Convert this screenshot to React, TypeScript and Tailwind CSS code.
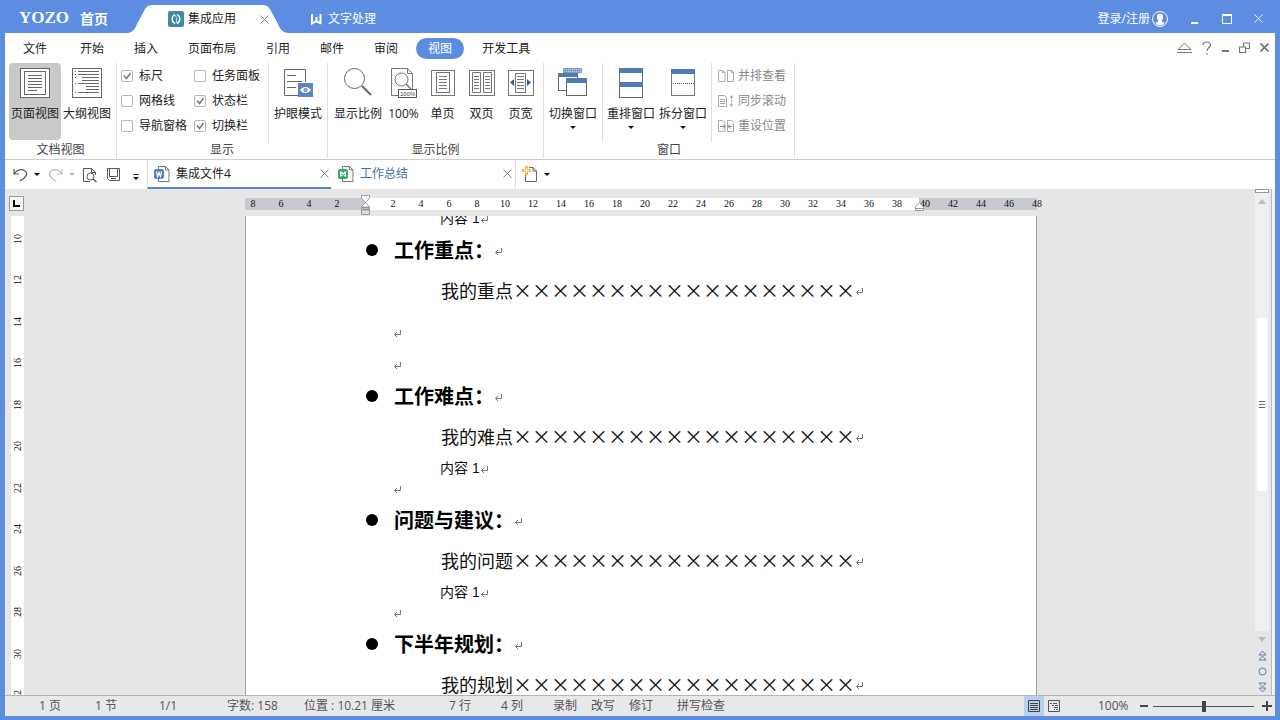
import { useState } from "react";
import type { ReactNode } from "react";

const menuTabs = ["开始", "插入", "页面布局", "引用", "邮件", "审阅", "视图", "开发工具"];

const CloseIcon = ({ size = 10, color = "#777", width = 1 }: { size?: number; color?: string; width?: number }) => (
  <svg width={size} height={size} viewBox="0 0 10 10" stroke={color} strokeWidth={width}>
    <path d="M.5 .5l9 9M9.5 .5l-9 9" />
  </svg>
);

const Caret = ({ color = "#111" }: { color?: string }) => (
  <svg width="6" height="3" viewBox="0 0 6 3" fill={color}>
    <path d="M0 0h6L3 3z" />
  </svg>
);

const ReturnMark = () => (
  <svg className="mt-1 shrink-0" width="9" height="8" viewBox="0 0 9 8" fill="none" stroke="#777">
    <path d="M7.500 0v4.500H1.500M4 2L1.500 4.500 4 7" />
  </svg>
);

const PageViewIcon = () => (
  <svg width="32" height="32" viewBox="0 0 32 32" fill="none" stroke="#666">
    <rect x="1.500" y="1.500" width="29" height="29" fill="#fff" />
    <rect x="5.500" y="4.500" width="21" height="23" />
    <path d="M9 8.500h14M9 11.500h14M9 14.500h14M9 17.500h14M9 20.500h14M9 23.500h9" />
  </svg>
);

const OutlineIcon = () => (
  <svg width="32" height="32" viewBox="0 0 32 32" fill="none" stroke="#666">
    <rect x="1.500" y="1.500" width="29" height="29" fill="#fff" />
    <path d="M7 4.500h21M7 7.500h21M11 10.500h17M11 13.500h17M7 16.500h21M15 19.500h13M15 22.500h13M7 25.500h21" />
    <path d="M4 4.500h1M4 7.500h1M4 10.500h1M4 16.500h1M4 25.500h1" />
  </svg>
);

const EyeIcon = () => (
  <svg width="32" height="32" viewBox="0 0 32 32" fill="none" stroke="#666">
    <path d="M16 28.500H2.500v-26h21V15" />
    <path d="M5 8.500h9M5 14.500h15M5 20.500h9" />
    <rect x="16" y="16" width="15" height="14" fill="#5b86c0" stroke="none" />
    <path d="M18 23c3-4 8-4 11 0-3 4-8 4-11 0z" fill="#fff" stroke="none" />
    <circle cx="23.500" cy="23" r="2" fill="#5b86c0" stroke="none" />
    <circle cx="23.500" cy="23" r=".7" fill="#fff" stroke="none" />
  </svg>
);

const ZoomIcon = () => (
  <svg width="32" height="32" viewBox="0 0 32 32" fill="none" stroke="#666">
    <circle cx="12.500" cy="11.500" r="10" />
    <path d="M20 19l9 9" strokeWidth="2" />
  </svg>
);

const HundredIcon = () => (
  <svg width="32" height="32" viewBox="0 0 32 32" fill="none" stroke="#777">
    <path d="M10 28.500H3.500v-27h16l5 5V22M19.500 1.500v5h5" />
    <circle cx="13.500" cy="12.500" r="6.500" fill="#fff" />
    <path d="M18 17l5 5" strokeWidth="1.500" />
    <rect x="10.500" y="22.500" width="18" height="8" fill="#fff" stroke="#555" />
    <text x="12" y="29" fontSize="6" fill="#444" stroke="none" fontFamily="Liberation Sans">
      100%
    </text>
  </svg>
);

const OnePageIcon = () => (
  <svg width="32" height="32" viewBox="0 0 32 32" fill="none" stroke="#777">
    <rect x="4.500" y="3.500" width="23" height="25" />
    <rect x="9.500" y="5.500" width="13" height="20" />
    <path d="M12 9.500h8M12 12.500h8M12 15.500h8M12 18.500h8M12 21.500h8" />
  </svg>
);

const TwoPageIcon = () => (
  <svg width="32" height="32" viewBox="0 0 32 32" fill="none" stroke="#777">
    <rect x="3.500" y="3.500" width="25" height="25" />
    <path d="M6.500 5.500h8v20h-8zM17.500 5.500h8v20h-8z" />
    <path d="M8 9.500h5M8 12.500h5M8 15.500h5M8 18.500h5M8 21.500h5M19 9.500h5M19 12.500h5M19 15.500h5M19 18.500h5M19 21.500h5" />
  </svg>
);

const PageWidthIcon = () => (
  <svg width="32" height="32" viewBox="0 0 32 32" fill="none" stroke="#777">
    <rect x="3.500" y="3.500" width="25" height="25" />
    <rect x="10.500" y="6.500" width="10" height="19" />
    <path d="M12 9.500h7M12 12.500h7M12 15.500h7M12 18.500h7M12 21.500h7" />
    <path d="M9 12v7l-4-3.500zM22 12v7l4-3.500z" fill="#2f5f8f" stroke="none" />
  </svg>
);

const SwitchIcon = () => (
  <svg width="32" height="32" viewBox="0 0 32 32" fill="none" stroke="#666">
    <path d="M6 1h19v5H6z" fill="#7d9bc2" stroke="none" />
    <path d="M7 2.500h17M7 4.500h17" stroke="#c5d3e6" strokeDasharray="1 1" />
    <rect x="1.500" y="7.500" width="19" height="16" fill="#fff" />
    <path d="M1 6h20v4H1z" fill="#4d7cb0" stroke="none" />
    <rect x="9.500" y="12.500" width="20" height="16" fill="#fff" />
    <path d="M9 11h21v5H9z" fill="#4d7cb0" stroke="none" />
  </svg>
);

const ArrangeIcon = () => (
  <svg width="32" height="32" viewBox="0 0 32 32" fill="none" stroke="#666">
    <rect x="4.500" y="1.500" width="23" height="29" fill="#fff" />
    <path d="M4 1h24v5H4zM4 15h24v5H4z" fill="#4d7cb0" stroke="none" />
  </svg>
);

const SplitIcon = () => (
  <svg width="32" height="32" viewBox="0 0 32 32" fill="none" stroke="#777">
    <rect x="4.500" y="3.500" width="23" height="25" fill="#fff" />
    <path d="M4 2h24v5H4z" fill="#4d7cb0" stroke="none" />
    <path d="M6 16.500h21" strokeDasharray="1 1" stroke="#444" />
  </svg>
);

const SideBySideIcon = () => (
  <svg width="17" height="14" viewBox="0 0 17 14" fill="none" stroke="#aaa">
    <path d="M.5 1.500h4.500l2 2v9H.5zM9.500 1.500h4l2 2v9h-6zM4.500 1.500v2h2M13.500 1.500v2h2" />
  </svg>
);

const SyncIcon = () => (
  <svg width="17" height="14" viewBox="0 0 17 14" fill="none" stroke="#aaa">
    <path d="M.5 1.500h6l2 2v9h-8zM2 5.500h5M2 7.500h5M2 9.500h5" />
    <path d="M13.500 3v8" strokeDasharray="2 1" />
    <path d="M11.500 3.500l2-2.500 2 2.500zM11.500 10.500l2 2.500 2-2.500z" fill="#aaa" stroke="none" />
  </svg>
);

const ResetIcon = () => (
  <svg width="17" height="14" viewBox="0 0 17 14" fill="none" stroke="#aaa">
    <path d="M.5 1.500h4.500l2 2v9H.5zM9.500 1.500h4l2 2v9h-6z" />
    <path d="M2 7.500h5M5 5.500l2 2-2 2M14 7.500h-4M12 5.500l-2 2 2 2" stroke="#888" />
  </svg>
);

type BigButtonProps = {
  icon: ReactNode;
  label: string;
  narrow?: boolean;
  active?: boolean;
  menu?: boolean;
};

const BigButton = ({ icon, label, narrow, active, menu }: BigButtonProps) => (
  <button
    className={`flex h-[77px] shrink-0 flex-col items-center rounded-sm pt-1 whitespace-nowrap ${
      narrow ? "w-[39px]" : "w-[52px]"
    } ${active ? "bg-[#c9c9c9]" : ""}`}
  >
    {icon}
    <span className="mt-[7px] h-4 leading-4">{label}</span>
    {menu && (
      <span className="mt-1">
        <Caret />
      </span>
    )}
  </button>
);

const Check = ({ label, on }: { label: string; on?: boolean }) => {
  const [checked, setChecked] = useState(!!on);
  return (
    <label className="flex h-[25px] items-center gap-1.5 whitespace-nowrap">
      <span className="relative flex size-3">
        <input
          type="checkbox"
          checked={checked}
          onChange={() => setChecked(!checked)}
          className="size-3 appearance-none rounded-xs border border-[#b5b5b5] bg-white"
        />
        {checked && (
          <svg className="pointer-events-none absolute inset-0" width="12" height="12" viewBox="0 0 12 12" fill="none" stroke="#777">
            <path d="M3 5.500l2.500 3L9.500 3" strokeWidth="1.500" />
          </svg>
        )}
      </span>
      {label}
    </label>
  );
};

const Group = ({ title, children }: { title: string; children: ReactNode }) => (
  <section className="flex shrink-0 flex-col border-r border-[#e0e0e0]">
    <div className="flex min-h-0 flex-1">{children}</div>
    <h2 className="h-4 shrink-0 text-center leading-4 text-[#444]">{title}</h2>
  </section>
);

const Divider = () => <div className="w-px shrink-0 bg-[#e0e0e0]" />;

const TitleBar = () => (
  <header className="flex h-[33px] shrink-0 items-end text-white">
    <div className="flex h-[29px] items-center gap-[11px] pl-[14px]">
      <span className="font-['Liberation_Serif',serif] text-[17px] font-bold">YOZO</span>
      <button className="text-sm font-bold">首页</button>
    </div>
    <div className="relative ml-5 h-[33px] w-[160px]">
      <svg className="absolute inset-0" width="160" height="33" viewBox="0 0 160 33" fill="#fff">
        <path d="M0 33c5-1 7-4 9-9l7-13c2-4 4-6 9-6h109c5 0 7 2 9 6l7 13c2 5 4 8 10 9z" />
      </svg>
      <div className="relative flex h-full items-center pt-[5px] pr-[19px] pl-10 text-[#222]">
        <svg width="16" height="16" viewBox="0 0 16 16">
          <rect width="16" height="16" rx="2" fill="#3f8ba3" />
          <path d="M7 3.500a5 5 0 0 0 0 9M9 3.500a5 5 0 0 1 0 9" fill="none" stroke="#fff" strokeWidth="1.300" />
          <path d="M6.500 3.500c2 2 3 6 1.500 9" fill="none" stroke="#cfe6ec" />
        </svg>
        <span className="ml-1 flex-1">集成应用</span>
        <button aria-label="关闭">
          <CloseIcon size={9} />
        </button>
      </div>
    </div>
    <button className="ml-[23px] flex h-[29px] items-center gap-1.5">
      <svg width="11" height="12" viewBox="0 0 11 12" fill="none" stroke="#fff" strokeWidth="2">
        <path d="M1 1v9.500L5.500 8V4v4.500L9.500 10V1" />
      </svg>
      文字处理
    </button>
    <div className="ml-auto flex h-[29px] items-center">
      <button className="flex items-center gap-0.5">
        登录/注册
        <svg width="16" height="16" viewBox="0 0 16 16">
          <circle cx="8" cy="8" r="7.500" fill="none" stroke="#fff" />
          <path d="M8 2.500c2.500 0 3.300 1.700 3 4-.2 1.500-.8 2.300-1.300 3 .1 1.500 2 1.500 3 2.500-2.500 3-7 3-9.400 0 1-1 2.900-1 3-2.500C5.800 8.800 5.200 8 5 6.500c-.3-2.300.5-4 3-4z" fill="#fff" />
        </svg>
      </button>
      <button aria-label="最小化" className="ml-[23px] flex h-3 w-[7px] items-end pb-px">
        <span className="h-0.5 w-full bg-white" />
      </button>
      <button aria-label="最大化" className="ml-6 size-2.5 border border-t-2 border-white" />
      <button aria-label="关闭窗口" className="mr-3 ml-[22px]">
        <CloseIcon size={9} color="#fff" />
      </button>
    </div>
  </header>
);

const MenuBar = () => {
  const [current, setCurrent] = useState("视图");
  return (
    <nav className="flex h-[29px] shrink-0 items-center gap-1.5 pt-0.5 pl-1.5">
      <button className="mr-[3px] h-[21px] px-3">文件</button>
      {menuTabs.map((tab) => (
        <button
          key={tab}
          onClick={() => setCurrent(tab)}
          className={`h-[21px] shrink-0 rounded-full px-3 ${tab === current ? "bg-[#5c8de1] text-white" : ""}`}
        >
          {tab}
        </button>
      ))}
      <div className="mr-1.5 ml-auto flex items-center gap-2.5 pb-0.5">
        <button aria-label="收起功能区">
          <svg width="15" height="13" viewBox="0 0 15 13" fill="none" stroke="#777">
            <path d="M1 8.500l6.500-6.500 6.500 6.500zM0 11.500h15" />
          </svg>
        </button>
        <button aria-label="帮助">
          <svg width="10" height="14" viewBox="0 0 10 14" fill="none" stroke="#777" strokeWidth="1.200">
            <path d="M1 4c0-4 7.500-4 7.500 0C8.500 6.500 5 6.500 5 10M5 12v1.500" />
          </svg>
        </button>
        <button aria-label="最小化文档" className="flex h-3 w-[7px] items-end pb-0.5">
          <span className="h-0.5 w-full bg-[#777]" />
        </button>
        <button aria-label="还原文档">
          <svg width="11" height="11" viewBox="0 0 11 11" fill="#fff" stroke="#777">
            <path d="M4.500 1h6v5.500h-6z" strokeWidth="1.200" />
            <path d="M.5 5h6v5.500h-6z" strokeWidth="1.200" />
          </svg>
        </button>
        <button aria-label="关闭文档">
          <CloseIcon size={9} width={2} />
        </button>
      </div>
    </nav>
  );
};

const Ribbon = () => (
  <div className="flex h-[98px] shrink-0 border-b border-[#cfcfcf] pt-px pb-px">
    <Group title="文档视图">
      <div className="flex pr-[3px] pl-1">
        <BigButton icon={<PageViewIcon />} label="页面视图" active />
        <BigButton icon={<OutlineIcon />} label="大纲视图" />
      </div>
    </Group>
    <Group title="显示">
      <div className="grid h-[75px] grid-cols-[73px_74px] pl-1">
        <Check label="标尺" on />
        <Check label="任务面板" />
        <Check label="网格线" />
        <Check label="状态栏" on />
        <Check label="导航窗格" />
        <Check label="切换栏" on />
      </div>
      <Divider />
      <div className="px-[3px]">
        <BigButton icon={<EyeIcon />} label="护眼模式" />
      </div>
    </Group>
    <Group title="显示比例">
      <div className="flex pr-[3px] pl-1">
        <BigButton icon={<ZoomIcon />} label="显示比例" />
        <BigButton icon={<HundredIcon />} label="100%" narrow />
        <BigButton icon={<OnePageIcon />} label="单页" narrow />
        <BigButton icon={<TwoPageIcon />} label="双页" narrow />
        <BigButton icon={<PageWidthIcon />} label="页宽" narrow />
      </div>
    </Group>
    <Group title="窗口">
      <div className="px-[3px]">
        <BigButton icon={<SwitchIcon />} label="切换窗口" menu />
      </div>
      <Divider />
      <div className="flex px-0.5">
        <BigButton icon={<ArrangeIcon />} label="重排窗口" menu />
        <BigButton icon={<SplitIcon />} label="拆分窗口" menu />
      </div>
      <Divider />
      <div className="flex flex-col pr-2 pl-1.5 text-[#888]">
        <button className="flex h-[25px] items-center gap-[3px]">
          <SideBySideIcon />
          并排查看
        </button>
        <button className="flex h-[25px] items-center gap-[3px]">
          <SyncIcon />
          同步滚动
        </button>
        <button className="flex h-[25px] items-center gap-[3px]">
          <ResetIcon />
          重设位置
        </button>
      </div>
    </Group>
  </div>
);

const FileIcon = ({ color, letter }: { color: string; letter: string }) => (
  <svg width="16" height="16" viewBox="0 0 16 16" fill="none">
    <path d="M4.500 4V.5h7l3.500 3.500v11.500H4.500V13" fill="#fff" stroke="#777" />
    <path d="M11.500 .5v3.500H15" stroke="#777" />
    <rect x="0" y="3" width="10" height="10" rx="2" fill={color} />
    <path d={letter} stroke="#fff" strokeWidth="1.200" />
  </svg>
);

const QuickBar = () => (
  <div className="flex h-[29px] shrink-0 items-center">
    <div className="flex w-[142px] items-center pl-2">
      <button aria-label="撤销">
        <svg width="15" height="16" viewBox="0 0 15 16" fill="none" stroke="#555" strokeWidth="1.200">
          <path d="M1 2v5h5M1 7c4-5 8-5 11-3s2 6-5 10" />
        </svg>
      </button>
      <button aria-label="撤销列表" className="ml-1.5">
        <Caret />
      </button>
      <button aria-label="恢复" className="ml-2">
        <svg width="15" height="16" viewBox="0 0 15 16" fill="none" stroke="#bbb" strokeWidth="1.200">
          <path d="M14 2v5H9M14 7C10 2 6 2 3 4s-2 6 5 10" />
        </svg>
      </button>
      <button aria-label="恢复列表" className="ml-1.5">
        <Caret color="#bbb" />
      </button>
      <button aria-label="打印预览" className="ml-[7px]">
        <svg width="16" height="16" viewBox="0 0 16 16" fill="none" stroke="#555">
          <path d="M8 14.500H1.500V1.500h8l4 4V8M9.500 1.500v4h4" />
          <circle cx="8.500" cy="9.500" r="3.500" />
          <path d="M11 12l3.500 3" strokeWidth="1.500" />
        </svg>
      </button>
      <button aria-label="保存" className="ml-2">
        <svg width="15" height="15" viewBox="0 0 15 15" fill="none" stroke="#555">
          <path d="M1.500 1.500h12v12H3.500l-2-2zM3.500 1.500v8h8v-8M5 11.500h5" />
        </svg>
      </button>
      <button aria-label="自定义" className="ml-3 flex flex-col items-center gap-0.5 pt-1">
        <span className="h-px w-1.5 bg-[#333]" />
        <Caret />
      </button>
    </div>
    <div className="flex h-full w-[184px] items-center border-b-2 border-l border-[#5b86c0] border-l-[#ddd] pr-0.5 pl-1.5">
      <FileIcon color="#4f82cc" letter="M2.500 5.500l1 5 1.500-4 1.500 4 1-5" />
      <button className="ml-1.5 flex-1 text-left">集成文件4</button>
      <button aria-label="关闭集成文件4">
        <CloseIcon size={9} />
      </button>
    </div>
    <div className="flex h-full w-[185px] items-center border-r border-b-2 border-[#ddd] border-b-transparent pr-[3px] pl-[7px]">
      <FileIcon color="#3aa76d" letter="M2.500 5.500v5M7.500 5.500v5M3 6l4 4M7 6l-4 4" />
      <button className="ml-1.5 flex-1 text-left text-[#3b6f9f]">工作总结</button>
      <button aria-label="关闭工作总结">
        <CloseIcon size={9} />
      </button>
    </div>
    <button aria-label="新建" className="ml-1.5">
      <svg width="17" height="17" viewBox="0 0 17 17" fill="none">
        <path d="M3.500 8v7.500h11V5l-3.500-3.500H7" fill="#fff" stroke="#666" />
        <path d="M11 1.500V5h3.500" stroke="#666" />
        <path d="M3 0h3v3h3v3H6v3H3V6H0V3h3z" fill="#f0b94d" />
        <path d="M4 2h1v2h2v1H5v2H4V5H2V4h2z" fill="#fff" />
      </svg>
    </button>
    <button aria-label="新建列表" className="ml-[5px]">
      <Caret />
    </button>
  </div>
);

// horizontal labels count away from the left margin, two characters per step
const rulerLabels = Array.from({ length: 29 }, (_, i) => Math.abs(i * 2 - 8));
const sideLabels = [10, 12, 14, 16, 18, 20, 22, 24, 26, 28, 30, 32];

const Ruler = () => (
  <div className="relative flex h-3 w-[792px] shrink-0">
    <div className="w-[120px] bg-[#c9c9d2]" />
    <div className="w-[554px] bg-white" />
    <div className="flex-1 bg-[#c9c9d2]" />
    <div className="absolute inset-y-0 -left-1.5 flex font-['Liberation_Serif',serif] text-[10px] leading-3 text-[#111]">
      {rulerLabels.map((n, i) => (
        <span key={i} className="w-7 text-center">
          {n || ""}
        </span>
      ))}
    </div>
    <svg className="absolute -top-[3px] left-[116px]" width="10" height="21" viewBox="0 0 10 21" fill="#fff" stroke="#999">
      <path d="M.5 .5h8v2.500L4.500 7.500 .5 3zM.5 12l4-4.500 4 4.500z" />
      <path d="M.5 12.500h8v7h-8z" fill="#ddd" />
      <path d="M1 14.500h7" strokeWidth="2" />
    </svg>
    <svg className="absolute top-[3px] left-[670px]" width="10" height="10" viewBox="0 0 10 10" fill="#fff" stroke="#999">
      <path d="M.5 9.500V6l4-4.500 4 4.500v3.500zM.5 7.500h8" />
    </svg>
  </div>
);

const Heading = ({ children }: { children: ReactNode }) => (
  <div className="flex h-10 items-center pl-[120px]">
    <span className="size-3 shrink-0 rounded-full bg-black" />
    <h3 className="ml-4 text-xl font-bold whitespace-nowrap text-black">{children}</h3>
    <ReturnMark />
  </div>
);

const Lead = ({ children }: { children: ReactNode }) => (
  <p className="flex h-[42px] items-center pb-0.5 pl-[195px] whitespace-nowrap">
    <span className="text-lg/[18px]">{children}</span>
    <span className="text-[19px]/[18px]">××××××××××××××××××</span>
    <ReturnMark />
  </p>
);

const Item = () => (
  <p className="flex h-[22px] items-center pb-0.5 pl-[194px] font-['Liberation_Sans','Noto_Sans_CJK_SC',sans-serif] text-sm">
    内容 1<ReturnMark />
  </p>
);

const Blank = ({ tall }: { tall?: boolean }) => (
  <p className={`flex pl-[147px] ${tall ? "h-8 items-end pb-1.5" : "h-5 items-center pb-1"}`}>
    <ReturnMark />
  </p>
);

const Page = () => (
  <article className="min-h-0 w-[792px] flex-1 overflow-hidden border-x border-[#a0a0a0] bg-white font-['Noto_Sans_CJK_SC',sans-serif] text-[#111]">
    <div className="-mt-2">
      <Item />
      <Heading>工作重点：</Heading>
      <Lead>我的重点</Lead>
      <Blank tall />
      <Blank tall />
      <Heading>工作难点：</Heading>
      <Lead>我的难点</Lead>
      <Item />
      <Blank />
      <Heading>问题与建议：</Heading>
      <Lead>我的问题</Lead>
      <Item />
      <Blank />
      <Heading>下半年规划：</Heading>
      <Lead>我的规划</Lead>
    </div>
  </article>
);

const ScrollBar = () => (
  <div className="flex w-[14px] shrink-0 flex-col items-center bg-[#efefef]">
    <div className="h-1 w-full border border-[#999] bg-white" />
    <button aria-label="向上滚动" className="flex h-[17px] items-center">
      <svg width="8" height="5" viewBox="0 0 8 5" fill="#bbb">
        <path d="M0 5h8L4 0z" />
      </svg>
    </button>
    <div className="flex w-full flex-1 flex-col items-center">
      <div className="flex-[108]" />
      <div className="flex w-2.5 flex-[174] flex-col items-center justify-center gap-0.5 bg-white">
        <span className="h-px w-1.5 bg-[#666]" />
        <span className="h-px w-1.5 bg-[#666]" />
        <span className="h-px w-1.5 bg-[#666]" />
      </div>
      <div className="flex-[140]" />
    </div>
    <div className="flex w-full flex-col items-center bg-[#e6e6e6]">
      <button aria-label="向下滚动" className="flex h-4 items-center">
        <svg width="8" height="5" viewBox="0 0 8 5" fill="#bbb">
          <path d="M0 0h8L4 5z" />
        </svg>
      </button>
      <button aria-label="上一页" className="flex h-4 items-center">
        <svg width="9" height="11" viewBox="0 0 9 11" fill="none" stroke="#5b7fb5">
          <path d="M1 5l3.500-4L8 5zM1 10l3.500-4L8 10z" />
        </svg>
      </button>
      <button aria-label="选择浏览对象" className="flex h-4 items-center">
        <svg width="9" height="9" viewBox="0 0 9 9" fill="none" stroke="#5b7fb5">
          <circle cx="4.500" cy="4.500" r="3.500" />
        </svg>
      </button>
      <button aria-label="下一页" className="flex h-4 items-center">
        <svg width="9" height="11" viewBox="0 0 9 11" fill="none" stroke="#5b7fb5">
          <path d="M1 1h7L4.500 5zM1 6h7l-3.500 4z" />
        </svg>
      </button>
    </div>
  </div>
);

const Workspace = () => (
  <main className="flex min-h-0 flex-1 bg-[#e6e6e6]">
    <div className="flex w-[22px] shrink-0 flex-col overflow-hidden">
      <div className="flex h-[27px] shrink-0 items-center pt-0.5 pl-1">
        <button
          aria-label="制表符"
          className="flex size-[15px] items-center justify-center border border-[#999] bg-[#f4f4f4]"
        >
          <svg width="7" height="7" viewBox="0 0 7 7" fill="none" stroke="#000" strokeWidth="2">
            <path d="M1 0v6h6" />
          </svg>
        </button>
      </div>
      <div className="mr-[3px] ml-1.5 min-h-0 flex-1 overflow-hidden bg-white pt-0.5 font-['Liberation_Serif',serif] text-[10px] leading-3 text-[#111]">
        {sideLabels.map((n) => (
          <div key={n} className="flex items-center justify-center odd:h-[41px] even:h-[42px]">
            <span className="rotate-180 [writing-mode:vertical-rl]">{n}</span>
          </div>
        ))}
      </div>
    </div>
    <div className="flex min-w-0 flex-1 flex-col items-center overflow-hidden">
      <div className="flex h-[27px] shrink-0 items-center pt-0.5">
        <Ruler />
      </div>
      <Page />
    </div>
    <ScrollBar />
    <div className="ml-0.5 w-1 shrink-0 border-l border-[#bbb] bg-[#f4f6fa]" />
  </main>
);

const StatusBar = () => {
  const [zoom, setZoom] = useState(100);
  return (
    <footer className="flex h-[21px] shrink-0 items-center border-t border-[#b5b5b5] bg-[#e8e8e8] pl-[34px] leading-4 whitespace-nowrap text-[#555]">
      <span className="w-14">1 页</span>
      <span className="w-16">1 节</span>
      <span className="w-[68px]">1/1</span>
      <span className="w-[77px]">字数: 158</span>
      <span className="w-[145px]">位置 : 10.21 厘米</span>
      <span className="w-[52px]">7 行</span>
      <span className="w-[52px]">4 列</span>
      <button className="mr-3.5">录制</button>
      <button className="mr-3.5">改写</button>
      <button className="mr-6">修订</button>
      <button>拼写检查</button>
      <div className="mr-[3px] ml-auto flex h-full items-center">
        <button aria-label="页面视图" className="flex h-full w-5 items-center justify-center bg-[#b9cfee]">
          <svg width="12" height="12" viewBox="0 0 12 12" fill="none" stroke="#444">
            <path d="M.5 .5h11v11H.5zM2 3.500h8M2 5.500h8M2 7.500h8M2 9.500h8" />
          </svg>
        </button>
        <button aria-label="大纲视图" className="ml-1">
          <svg width="12" height="12" viewBox="0 0 12 12" fill="none" stroke="#555">
            <path d="M.5 .5h11v11H.5zM2 3.500h2M5 3.500h4M4 5.500h2M7 5.500h3M6 7.500h4M6 9.500h1M8 9.500h2" />
          </svg>
        </button>
        <label htmlFor="zoom" className="ml-[38px] w-8">
          {zoom}%
        </label>
        <button aria-label="缩小" className="ml-2.5 flex h-4 w-2 items-center" onClick={() => setZoom(Math.max(10, zoom - 10))}>
          <span className="h-0.5 w-full bg-[#444]" />
        </button>
        <input
          id="zoom"
          type="range"
          min={10}
          max={190}
          value={zoom}
          onChange={(e) => setZoom(Number(e.target.value))}
          className="mx-[5px] h-3 w-[101px] appearance-none bg-transparent [&::-webkit-slider-runnable-track]:h-px [&::-webkit-slider-runnable-track]:bg-[#555] [&::-webkit-slider-thumb]:-mt-[5px] [&::-webkit-slider-thumb]:h-[11px] [&::-webkit-slider-thumb]:w-1 [&::-webkit-slider-thumb]:appearance-none [&::-webkit-slider-thumb]:bg-[#444]"
        />
        <button aria-label="放大" className="ml-[3px]" onClick={() => setZoom(Math.min(190, zoom + 10))}>
          <svg width="10" height="10" viewBox="0 0 10 10" stroke="#444" strokeWidth="2">
            <path d="M0 5h10M5 0v10" />
          </svg>
        </button>
      </div>
    </footer>
  );
};

export default function App() {
  return (
    <div className="flex h-screen flex-col overflow-hidden bg-[#5c8de1] px-[5px] pb-1 font-['Open_Sans','Noto_Sans_CJK_SC',sans-serif] text-xs text-[#222]">
      <TitleBar />
      <div className="flex min-h-0 flex-1 flex-col bg-white">
        <MenuBar />
        <Ribbon />
        <QuickBar />
        <Workspace />
        <StatusBar />
      </div>
    </div>
  );
}
